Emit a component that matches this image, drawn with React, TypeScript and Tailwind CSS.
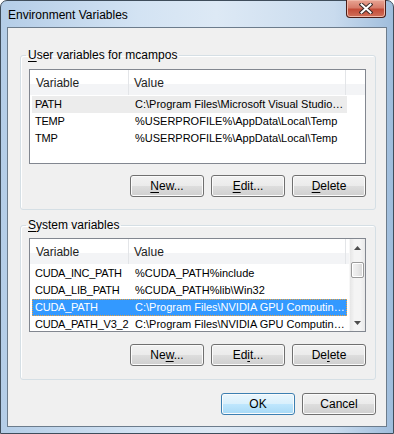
import type { ReactNode } from 'react';

const btnBase =
  'h-[22px] w-[74px] rounded-[3px] border text-[12px] leading-none text-black shadow-[inset_0_0_0_1px_#fbfbfb]';
const btnNormal =
  'border-[#707070] bg-[linear-gradient(#f2f2f2_0%,#ebebeb_48%,#dddddd_52%,#cfcfcf_100%)]';
const btnDefault =
  'border-[#3c7fb1] bg-[linear-gradient(#eaf6fd_0%,#d9f0fc_48%,#bee6fd_52%,#a7d9f5_100%)] shadow-[inset_0_0_0_1px_#c7eefd]';

const Btn = ({ children, primary }: { children: ReactNode; primary?: boolean }) => (
  <button className={`${btnBase} ${primary ? btnDefault : btnNormal}`}>{children}</button>
);

const U = ({ children }: { children: ReactNode }) => (
  <span className="underline decoration-1 underline-offset-[2px]">{children}</span>
);

type Row = { name: string; value: string; state?: 'focus' | 'soft' };

const userVars: Row[] = [
  { name: 'PATH', value: 'C:\\Program Files\\Microsoft Visual Studio…', state: 'soft' },
  { name: 'TEMP', value: '%USERPROFILE%\\AppData\\Local\\Temp' },
  { name: 'TMP', value: '%USERPROFILE%\\AppData\\Local\\Temp' },
];

const systemVars: Row[] = [
  { name: 'CUDA_INC_PATH', value: '%CUDA_PATH%include' },
  { name: 'CUDA_LIB_PATH', value: '%CUDA_PATH%lib\\Win32' },
  { name: 'CUDA_PATH', value: 'C:\\Program Files\\NVIDIA GPU Computin…', state: 'focus' },
  { name: 'CUDA_PATH_V3_2', value: 'C:\\Program Files\\NVIDIA GPU Computin…' },
];

// column header, light split gradient like the Vista list view
const Header = ({ extra }: { extra?: boolean }) => (
  <div className="flex h-[25px] shrink-0 items-center bg-[linear-gradient(#ffffff_0%,#ffffff_55%,#f3f4f6_55%,#f3f4f6_100%)] text-[12px] text-[#1e1e1e]">
    <div className="flex h-full w-[99px] items-center border-r border-[#e3e5e8] pl-[6px]">Variable</div>
    <div className="flex h-full w-[217px] items-center border-r border-[#e3e5e8] pl-[5px]">Value</div>
    {extra && <div className="h-full flex-1" />}
  </div>
);

const VarRow = ({ row }: { row: Row }) => {
  const tone =
    row.state === 'focus'
      ? 'bg-[#3399ff] text-white border border-dotted border-[#f2a33a]'
      : row.state === 'soft'
        ? 'bg-[#ececec] text-black border border-transparent'
        : 'text-black border border-transparent';
  return (
    <div className={`ml-[2px] flex h-[17px] w-[315px] shrink-0 items-center text-[11px] whitespace-nowrap ${tone}`}>
      <span className="w-[98px] shrink-0 overflow-hidden pl-[2px] tracking-[-0.25px]">{row.name}</span>
      <span className="flex-1 overflow-hidden pl-[4px]">{row.value}</span>
    </div>
  );
};

const ScrollBar = () => (
  <div className="flex w-[16px] shrink-0 flex-col border-l border-[#f7f7f7] bg-[linear-gradient(90deg,#e6e6e6,#f4f4f4_30%,#f4f4f4_70%,#e9e9e9)]">
    <div className="flex h-[17px] items-center justify-center">
      <svg width="7" height="4" viewBox="0 0 7 4">
        <path d="M0 4 L3.5 0 L7 4 Z" fill="#4d4d4d" />
      </svg>
    </div>
    <div className="mx-[1px] mt-[6px] h-[16px] rounded-[2px] border border-[#9a9a9a] bg-[linear-gradient(90deg,#f3f3f3,#e8e8e8_50%,#d7d7d7)] shadow-[inset_0_0_0_1px_#ffffff]" />
    <div className="flex-1" />
    <div className="flex h-[17px] items-center justify-center">
      <svg width="7" height="4" viewBox="0 0 7 4">
        <path d="M0 0 L7 0 L3.5 4 Z" fill="#4d4d4d" />
      </svg>
    </div>
  </div>
);

const GroupBox = ({ label, children, className }: { label: ReactNode; children: ReactNode; className: string }) => (
  <fieldset className={`mr-[10px] ml-[12px] rounded-[3px] border border-[#d5dfe5] pr-[9px] pl-[8px] shadow-[inset_1px_1px_0_#ffffff] ${className}`}>
    <legend className="-ml-[3px] px-[2px] text-[12px] leading-[16px] text-black">{label}</legend>
    {children}
  </fieldset>
);

export default function App() {
  return (
    <div className="h-[434px] w-[394px] bg-white font-['Liberation_Sans',Arial,sans-serif]">
      <div className="flex h-[434px] w-[394px] flex-col rounded-t-[7px] border border-[#3f4d5b] bg-[linear-gradient(90deg,#b4cde7_0%,#d3e3f3_35%,#dde9f5_55%,#c9dbee_85%,#9fbddc_100%)] px-[6px] pb-[6px]">
        {/* title bar */}
        <div className="flex h-[26px] shrink-0 items-start justify-between">
          <span className="mt-[6px] ml-[1px] text-[12px] leading-[16px] text-black">Environment Variables</span>
          <div className="-mt-[1px] mr-[1px] flex h-[18px] w-[40px] items-center justify-center rounded-b-[4px] border border-t-0 border-[#4a1d17] bg-[linear-gradient(#e8a493_0%,#d77c6a_45%,#c44c38_55%,#d0705a_100%)] shadow-[inset_0_0_0_1px_#f0b8a8]">
            <svg width="14" height="11" viewBox="0 0 14 11">
              <path d="M2.5 1.5 L11.5 9.5 M11.5 1.5 L2.5 9.5" stroke="#3a2a28" strokeWidth="4" strokeLinecap="square" />
              <path d="M2.5 1.5 L11.5 9.5 M11.5 1.5 L2.5 9.5" stroke="#ffffff" strokeWidth="2" strokeLinecap="square" />
            </svg>
          </div>
        </div>

        {/* client area */}
        <div className="flex h-[400px] shrink-0 flex-col border border-[#6c7c8c] bg-[#f0f0f0]">
          <GroupBox className="mt-[19px] pt-[6px] pb-[12px]" label={<><U>U</U>ser variables for mcampos</>}>
            <div className="flex h-[95px] flex-col overflow-hidden border border-[#828790] bg-white">
              <Header extra />
              <div className="mt-[1px] flex flex-col">
                {userVars.map((r) => (
                  <VarRow key={r.name} row={r} />
                ))}
              </div>
            </div>
            <div className="mt-[11px] flex justify-end gap-[7px]">
              <Btn><U>N</U>ew...</Btn>
              <Btn><U>E</U>dit...</Btn>
              <Btn><U>D</U>elete</Btn>
            </div>
          </GroupBox>

          <GroupBox className="mt-[7px] pt-[5px] pb-[13px]" label={<><U>S</U>ystem variables</>}>
            <div className="flex h-[94px] overflow-hidden border border-[#828790] bg-white">
              <div className="flex flex-1 flex-col overflow-hidden">
                <Header />
                <div className="mt-[1px] flex flex-col">
                  {systemVars.map((r) => (
                    <VarRow key={r.name} row={r} />
                  ))}
                </div>
              </div>
              <ScrollBar />
            </div>
            <div className="mt-[12px] flex justify-end gap-[7px]">
              <Btn>Ne<U>w</U>...</Btn>
              <Btn>Ed<U>i</U>t...</Btn>
              <Btn>De<U>l</U>ete</Btn>
            </div>
          </GroupBox>

          <div className="mt-[13px] mr-[10px] flex justify-end gap-[7px]">
            <Btn primary>OK</Btn>
            <Btn>Cancel</Btn>
          </div>
        </div>
      </div>
    </div>
  );
}
